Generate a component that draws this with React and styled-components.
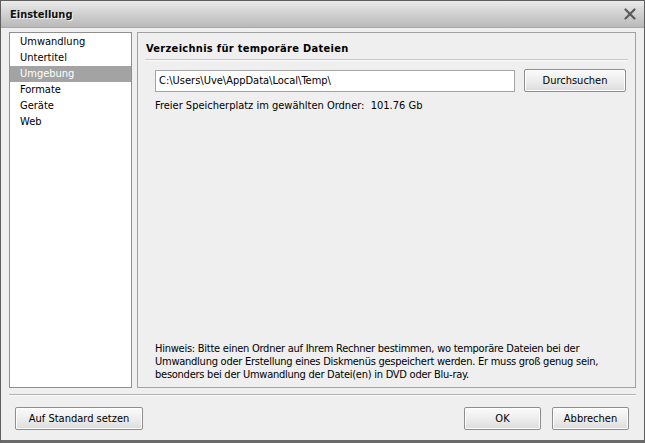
import React from "react";
import styled, { createGlobalStyle } from "styled-components";

const GlobalStyle = createGlobalStyle`
  html, body {
    margin: 0;
    padding: 0;
    background: #efefef;
  }
  body {
    font-family: "DejaVu Sans Condensed", "Liberation Sans", sans-serif;
    font-size: 11px;
    color: #000;
  }
`;

const Window = styled.div`
  width: 645px;
  height: 443px;
  box-sizing: border-box;
  display: flex;
  flex-direction: column;
  background: #efefef;
  border: 1px solid #5e5e5e;
  border-bottom: 3px solid #6a6a6a;
`;

const TitleBar = styled.div`
  height: 26px;
  flex: none;
  display: flex;
  align-items: center;
  justify-content: space-between;
  padding: 0 7px 0 9px;
  background: linear-gradient(#ebebeb, #d3d3d3 45%, #b9b9b9);
  border-bottom: 1px solid #a9a9a9;
`;

const Title = styled.span`
  font-weight: bold;
  font-size: 11px;
  color: #111;
  text-shadow: 1px 1px 0 #f4f4f4;
`;

const CloseIcon = styled.svg`
  width: 14px;
  height: 14px;
  display: block;
`;

const Body = styled.div`
  flex: 1;
  display: flex;
  flex-direction: column;
  padding: 4px 8px 0 8px;
  min-height: 0;
`;

const Main = styled.div`
  height: 356px;
  display: flex;
  gap: 5px;
`;

const NavList = styled.ul`
  list-style: none;
  margin: 0;
  padding: 1px 0 0;
  width: 123px;
  box-sizing: border-box;
  background: #fff;
  border: 1px solid #8f8f8f;
`;

const NavItem = styled.li`
  height: 16px;
  line-height: 16px;
  padding-left: 10px;
  background: ${(p) => (p.$active ? "#a3a3a3" : "transparent")};
  color: ${(p) => (p.$active ? "#fff" : "#000")};
`;

const Panel = styled.section`
  flex: 1;
  display: flex;
  flex-direction: column;
  box-sizing: border-box;
  border: 1px solid #a2a2a2;
  padding: 6px 7px 6px 7px;
`;

const Heading = styled.h2`
  margin: 0;
  padding: 3px 0 4px 1px;
  font-size: 11px;
  font-weight: bold;
  letter-spacing: 0.3px;
  border-bottom: 1px solid #c9c9c9;
  box-shadow: 0 1px 0 #fafafa;
`;

const PathRow = styled.div`
  display: flex;
  align-items: center;
  gap: 9px;
  margin: 9px 2px 0 10px;
`;

const PathInput = styled.div`
  flex: 1;
  height: 22px;
  box-sizing: border-box;
  line-height: 20px;
  padding-left: 3px;
  background: #fff;
  border: 1px solid #a5a5a5;
`;

const Button = styled.button`
  height: 23px;
  width: ${(p) => p.$width || "77px"};
  box-sizing: border-box;
  padding: 0;
  font: inherit;
  color: #000;
  background: linear-gradient(#fbfbfb, #ececec 55%, #dcdcdc);
  border: 1px solid #8e8e8e;
  border-radius: 2px;
  box-shadow: inset 0 0 0 1px #fff;
`;

const Info = styled.p`
  margin: 6px 0 0 10px;
  line-height: 16px;
`;

const Spacer = styled.div`
  flex: 1;
`;

const Hint = styled.p`
  margin: 0 0 0 10px;
  line-height: 13px;
  letter-spacing: -0.25px;
`;

const Separator = styled.div`
  margin-top: 6px;
  border-top: 1px solid #b3b3b3;
  border-bottom: 1px solid #fbfbfb;
`;

const Footer = styled.div`
  display: flex;
  align-items: center;
  gap: 11px;
  padding: 11px 7px 0 6px;
`;

const sections = ["Umwandlung", "Untertitel", "Umgebung", "Formate", "Geräte", "Web"];

export default function App() {
  return (
    <>
      <GlobalStyle />
      <Window>
        <TitleBar>
          <Title>Einstellung</Title>
          <CloseIcon viewBox="0 0 14 14">
            <path
              d="M2.5 2.5 L11.5 11.5 M11.5 2.5 L2.5 11.5"
              stroke="#5a5a5a"
              strokeWidth="2.2"
              strokeLinecap="round"
            />
          </CloseIcon>
        </TitleBar>
        <Body>
          <Main>
            <NavList>
              {sections.map((s) => (
                <NavItem key={s} $active={s === "Umgebung"}>
                  {s}
                </NavItem>
              ))}
            </NavList>
            <Panel>
              <Heading>Verzeichnis für temporäre Dateien</Heading>
              <PathRow>
                <PathInput>C:\Users\Uve\AppData\Local\Temp\</PathInput>
                <Button $width="102px">Durchsuchen</Button>
              </PathRow>
              <Info>Freier Speicherplatz im gewählten Ordner:&nbsp; 101.76 Gb</Info>
              <Spacer />
              <Hint>
                Hinweis: Bitte einen Ordner auf Ihrem Rechner bestimmen, wo temporäre Dateien bei der
                <br />
                Umwandlung oder Erstellung eines Diskmenüs gespeichert werden. Er muss groß genug sein,
                <br />
                besonders bei der Umwandlung der Datei(en) in DVD oder Blu-ray.
              </Hint>
            </Panel>
          </Main>
          <Separator />
          <Footer>
            <Button $width="128px">Auf Standard setzen</Button>
            <Spacer />
            <Button>OK</Button>
            <Button>Abbrechen</Button>
          </Footer>
        </Body>
      </Window>
    </>
  );
}
